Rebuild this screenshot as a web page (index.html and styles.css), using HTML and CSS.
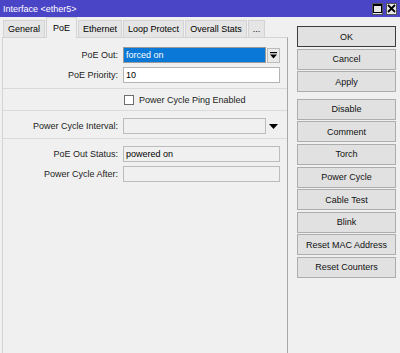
FILE: index.html
```html
<!doctype html>
<html lang="en">
<head>
  <meta charset="UTF-8">
  <title>Interface &lt;ether5&gt;</title>
  <link rel="stylesheet" href="styles.css">
</head>
<body>

<div class="window">
  <div class="titlebar">
    <span class="title">Interface &lt;ether5&gt;</span>
    <div class="controls">
      <span class="ctl">
        <svg width="9" height="9" viewBox="0 0 9 9"><rect x="0.5" y="0.5" width="8" height="8" fill="none" stroke="#000"/><line x1="0" y1="1.5" x2="9" y2="1.5" stroke="#000"/></svg>
      </span>
      <span class="ctl">
        <svg width="9" height="9" viewBox="0 0 9 9"><path d="M1 1 L8 8 M8 1 L1 8" stroke="#000" stroke-width="1.8"/></svg>
      </span>
    </div>
  </div>

  <div class="main">
    <div class="left">
      <div class="tabs">
        <span class="tab">General</span>
        <span class="tab active">PoE</span>
        <span class="tab">Ethernet</span>
        <span class="tab">Loop Protect</span>
        <span class="tab">Overall Stats</span>
        <span class="tab">...</span>
      </div>

      <div class="panel">
        <div class="row">
          <label>PoE Out:</label>
          <div class="field selected short">forced on</div>
          <span class="drop">
            <svg width="7" height="7" viewBox="0 0 7 7"><rect x="0" y="0" width="7" height="1.2" fill="#000"/><path d="M0 2.5 H7 L3.5 6.5 Z" fill="#000"/></svg>
          </span>
        </div>
        <div class="row">
          <label>PoE Priority:</label>
          <div class="field">10</div>
        </div>

        <div class="sep first"></div>

        <div class="check-row">
          <span class="box"></span>
          <span>Power Cycle Ping Enabled</span>
        </div>

        <div class="sep"></div>

        <div class="row">
          <label>Power Cycle Interval:</label>
          <div class="field readonly short"></div>
          <span class="arrow">
            <svg width="9" height="5" viewBox="0 0 9 5"><path d="M0 0 H9 L4.5 5 Z" fill="#000"/></svg>
          </span>
        </div>

        <div class="sep"></div>

        <div class="row">
          <label>PoE Out Status:</label>
          <div class="field readonly">powered on</div>
        </div>
        <div class="row">
          <label>Power Cycle After:</label>
          <div class="field readonly"></div>
        </div>
      </div>
    </div>

    <div class="actions">
      <button class="btn default">OK</button>
      <button class="btn">Cancel</button>
      <button class="btn">Apply</button>
      <button class="btn spaced">Disable</button>
      <button class="btn">Comment</button>
      <button class="btn">Torch</button>
      <button class="btn">Power Cycle</button>
      <button class="btn">Cable Test</button>
      <button class="btn">Blink</button>
      <button class="btn">Reset MAC Address</button>
      <button class="btn">Reset Counters</button>
    </div>
  </div>
</div>

</body>
</html>
```

FILE: styles.css
```css
body {
  margin: 0;
  background-color: #f0f0f0;
  font-family: "Liberation Sans", Arial, sans-serif;
  font-size: 9px;
  color: #000;
}

.window {
  width: 400px;
  height: 353px;
  overflow: hidden;
}

.titlebar {
  height: 17px;
  background-color: #4a44c6;
  color: #fff;
  display: flex;
  align-items: center;
  justify-content: space-between;
  padding: 0 3px 0 3px;
}

.title {
  font-size: 9px;
}

.controls {
  display: flex;
  gap: 3px;
}

.ctl {
  width: 11px;
  height: 12px;
  background-color: #e8e8e8;
  border: 1px solid #555;
  box-sizing: border-box;
  display: flex;
  align-items: center;
  justify-content: center;
}

.main {
  display: flex;
}

.left {
  width: 286px;
  margin-left: 2px;
}

.tabs {
  height: 20px;
  display: flex;
  align-items: flex-end;
  padding-left: 1px;
}

.tab {
  height: 17px;
  box-sizing: border-box;
  padding: 0 4px;
  border: 1px solid #d4d4d4;
  border-bottom: none;
  background-color: #e5e5e5;
  display: flex;
  align-items: center;
  margin-right: 1px;
}

.tab.active {
  height: 21px;
  margin-bottom: -1px;
  padding: 0 6px;
  background-color: #f0f0f0;
  position: relative;
  z-index: 1;
}

.panel {
  height: 320px;
  box-sizing: border-box;
  border: 1px solid #d4d4d4;
  border-right-color: #a8a8a8;
  padding-top: 9px;
}

.row {
  display: flex;
  align-items: center;
  height: 16px;
  margin-bottom: 4px;
}

.row label {
  width: 115px;
  text-align: right;
  margin-right: 5px;
  color: #222;
}

.field {
  width: 157px;
  height: 16px;
  box-sizing: border-box;
  border: 1px solid #b4b4b4;
  background-color: #fff;
  padding-left: 2px;
  display: flex;
  align-items: center;
}

.field.short {
  width: 143px;
}

.field.selected {
  background-color: #0a78d6;
  color: #fff;
  border-color: #9a9a9a;
}

.field.readonly {
  background-color: #f0f0f0;
  border-color: #bcbcbc;
}

.drop {
  width: 13px;
  height: 15px;
  margin-left: 1px;
  box-sizing: border-box;
  border: 1px solid #bcbcbc;
  background-color: #e9e9e9;
  display: flex;
  align-items: center;
  justify-content: center;
}

.arrow {
  width: 14px;
  display: flex;
  justify-content: center;
}

.sep {
  height: 1px;
  background-color: #dadada;
  margin: 3px 0 7px;
}

.sep.first {
  margin-top: 5px;
  margin-bottom: 5px;
}

.check-row {
  display: flex;
  align-items: center;
  height: 11px;
  padding-left: 121px;
  margin-bottom: 5px;
  color: #222;
}

.box {
  width: 10px;
  height: 10px;
  box-sizing: border-box;
  border: 1px solid #6e6e6e;
  background-color: #fff;
  margin-right: 5px;
}

.actions {
  width: 99px;
  margin-left: 9px;
  padding-top: 9px;
  display: flex;
  flex-direction: column;
  gap: 1.6px;
}

.btn {
  height: 21px;
  box-sizing: border-box;
  border: 1px solid #adadad;
  background-color: #e1e1e1;
  font-family: "Liberation Sans", Arial, sans-serif;
  font-size: 9px;
  color: #111;
  padding: 0;
}

.btn.default {
  border-color: #3c3c3c;
}

.btn.spaced {
  margin-top: 5px;
}
```
